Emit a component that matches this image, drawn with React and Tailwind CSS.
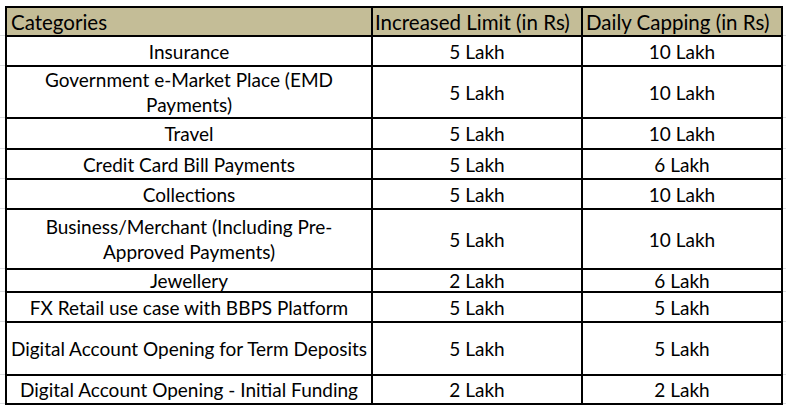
const rows = [
  { h: 'h-[28px]', name: ['Insurance'], limit: '5 Lakh', cap: '10 Lakh' },
  { h: 'h-[50px]', name: ['Government e-Market Place (EMD', 'Payments)'], limit: '5 Lakh', cap: '10 Lakh' },
  { h: 'h-[29px]', name: ['Travel'], limit: '5 Lakh', cap: '10 Lakh' },
  { h: 'h-[28px]', name: ['Credit Card Bill Payments'], limit: '5 Lakh', cap: '6 Lakh' },
  { h: 'h-[28px]', name: ['Collections'], limit: '5 Lakh', cap: '10 Lakh' },
  { h: 'h-[58px]', name: ['Business/Merchant (Including Pre-', 'Approved Payments)'], limit: '5 Lakh', cap: '10 Lakh' },
  { h: 'h-[21px]', name: ['Jewellery'], limit: '2 Lakh', cap: '6 Lakh' },
  { h: 'h-[28px]', name: ['FX Retail use case with BBPS Platform'], limit: '5 Lakh', cap: '5 Lakh' },
  { h: 'h-[51px]', name: ['Digital Account Opening for Term Deposits'], limit: '5 Lakh', cap: '5 Lakh' },
  { h: 'h-[27px]', name: ['Digital Account Opening - Initial Funding'], limit: '2 Lakh', cap: '2 Lakh' },
];

// faint excel gridlines beside the table
const gridHeights = ['h-[30px]', 'h-[30px]', 'h-[52px]', 'h-[31px]', 'h-[30px]', 'h-[30px]', 'h-[60px]', 'h-[23px]', 'h-[30px]', 'h-[53px]', 'h-[29px]'];

function GridStrip({ width }) {
  return (
    <div className={`flex flex-col ${width}`}>
      {gridHeights.map((h, i) => (
        <div key={i} className={`${h} border-b border-[#dadcdf]`} />
      ))}
    </div>
  );
}

function Cell({ children, className = '' }) {
  return (
    <div className={`bg-white flex flex-col items-center justify-center text-center leading-[25px] ${className}`}>
      {children}
    </div>
  );
}

export default function App() {
  return (
    <div
      className="w-[786px] h-[411px] bg-white pt-[6px] flex text-black text-[19px]"
      style={{ fontFamily: 'Lato, "Open Sans", sans-serif' }}
    >
      <GridStrip width="w-[5px]" />
      <div className="grid grid-cols-[364px_208px_198px] gap-[2px] bg-black p-[2px] h-fit">
        <div className="h-[27px] bg-[#c4bd97] flex items-end pl-[4px] text-[20.5px] leading-[26px] whitespace-nowrap">Categories</div>
        <div className="h-[27px] bg-[#c4bd97] flex items-end pl-[2px] text-[20.5px] leading-[26px] whitespace-nowrap">Increased Limit (in Rs)</div>
        <div className="h-[27px] bg-[#c4bd97] flex items-end pl-[3px] text-[20.5px] leading-[26px] whitespace-nowrap">Daily Capping (in Rs)</div>
        {rows.map((r, i) => (
          <div key={i} className="contents">
            <Cell className={r.h}>
              {r.name.map((line, j) => (
                <span key={j} className="whitespace-nowrap">{line}</span>
              ))}
            </Cell>
            <Cell className={r.h}>{r.limit}</Cell>
            <Cell className={r.h}>{r.cap}</Cell>
          </div>
        ))}
      </div>
      <GridStrip width="w-[3px]" />
    </div>
  );
}
